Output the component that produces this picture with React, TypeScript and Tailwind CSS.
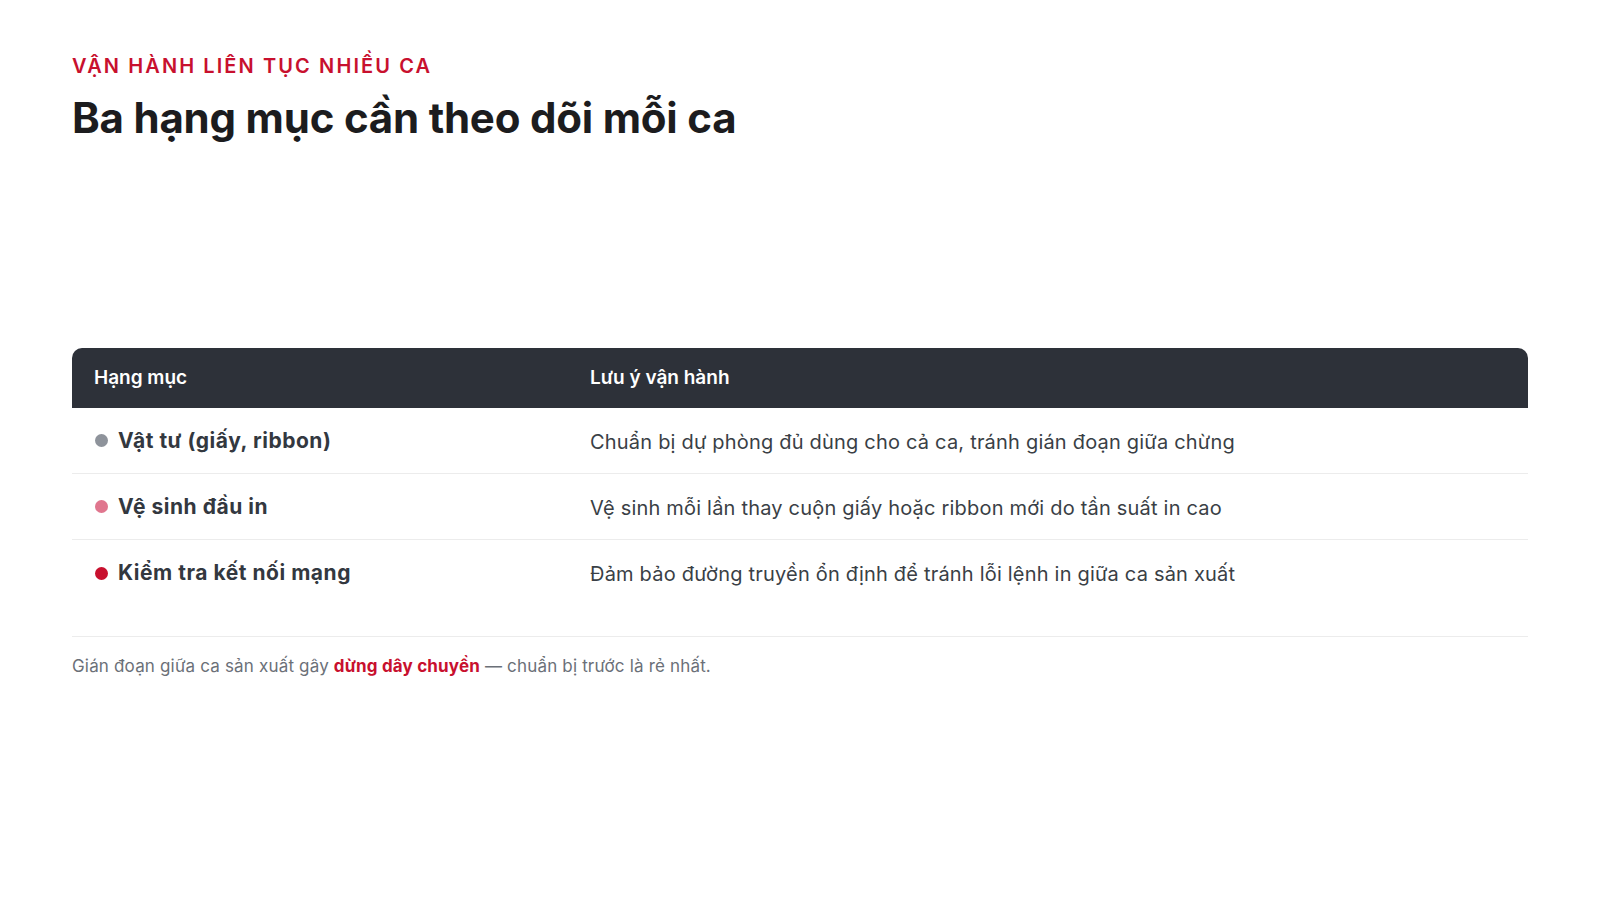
const rows = [
  {
    dot: "bg-[#8e939b]",
    name: "Vật tư (giấy, ribbon)",
    note: "Chuẩn bị dự phòng đủ dùng cho cả ca, tránh gián đoạn giữa chừng",
  },
  {
    dot: "bg-[#e0768e]",
    name: "Vệ sinh đầu in",
    note: "Vệ sinh mỗi lần thay cuộn giấy hoặc ribbon mới do tần suất in cao",
  },
  {
    dot: "bg-[#c8102e]",
    name: "Kiểm tra kết nối mạng",
    note: "Đảm bảo đường truyền ổn định để tránh lỗi lệnh in giữa ca sản xuất",
  },
]

export default function App() {
  return (
    <div className="min-h-screen w-full bg-white px-[72px] pt-[54px] font-['Inter',sans-serif]">
      <p className="text-[20px] font-semibold tracking-[0.105em] leading-[24px] text-[#c8102e]">
        VẬN HÀNH LIÊN TỤC NHIỀU CA
      </p>
      <h1 className="mt-[14px] text-[42px] font-bold leading-[52px] tracking-[-0.005em] text-[#1c1c1e]">
        Ba hạng mục cần theo dõi mỗi ca
      </h1>

      <div className="mt-[204px]">
        <div className="flex h-[60px] items-center rounded-t-[10px] bg-[#2d3139] text-[19px] font-semibold text-white">
          <div className="w-[496px] px-[22px]">Hạng mục</div>
          <div className="flex-1 px-[22px]">Lưu ý vận hành</div>
        </div>
        <div className="pb-[30px]">
          {rows.map((r, i) => (
            <div
              key={r.name}
              className={
                "flex h-[66px] items-center " + (i < rows.length - 1 ? "border-b border-[#ececec]" : "")
              }
            >
              <div className="flex w-[496px] items-center gap-[10px] px-[23px]">
                <span className={"h-[13px] w-[13px] shrink-0 rounded-full " + r.dot} />
                <span className="text-[21px] font-bold tracking-[0.025em] text-[#33383f]">{r.name}</span>
              </div>
              <div className="flex-1 px-[22px] pt-[2px] text-[20px] tracking-[0.01em] text-[#3a3f46]">{r.note}</div>
            </div>
          ))}
        </div>
        <div className="border-t border-[#ececec] pt-[17px] text-[17px] tracking-[0.01em] text-[#6b7078]">
          Gián đoạn giữa ca sản xuất gây{" "}
          <span className="font-bold text-[#c8102e]">dừng dây chuyền</span> — chuẩn bị trước là rẻ nhất.
        </div>
      </div>
    </div>
  )
}
